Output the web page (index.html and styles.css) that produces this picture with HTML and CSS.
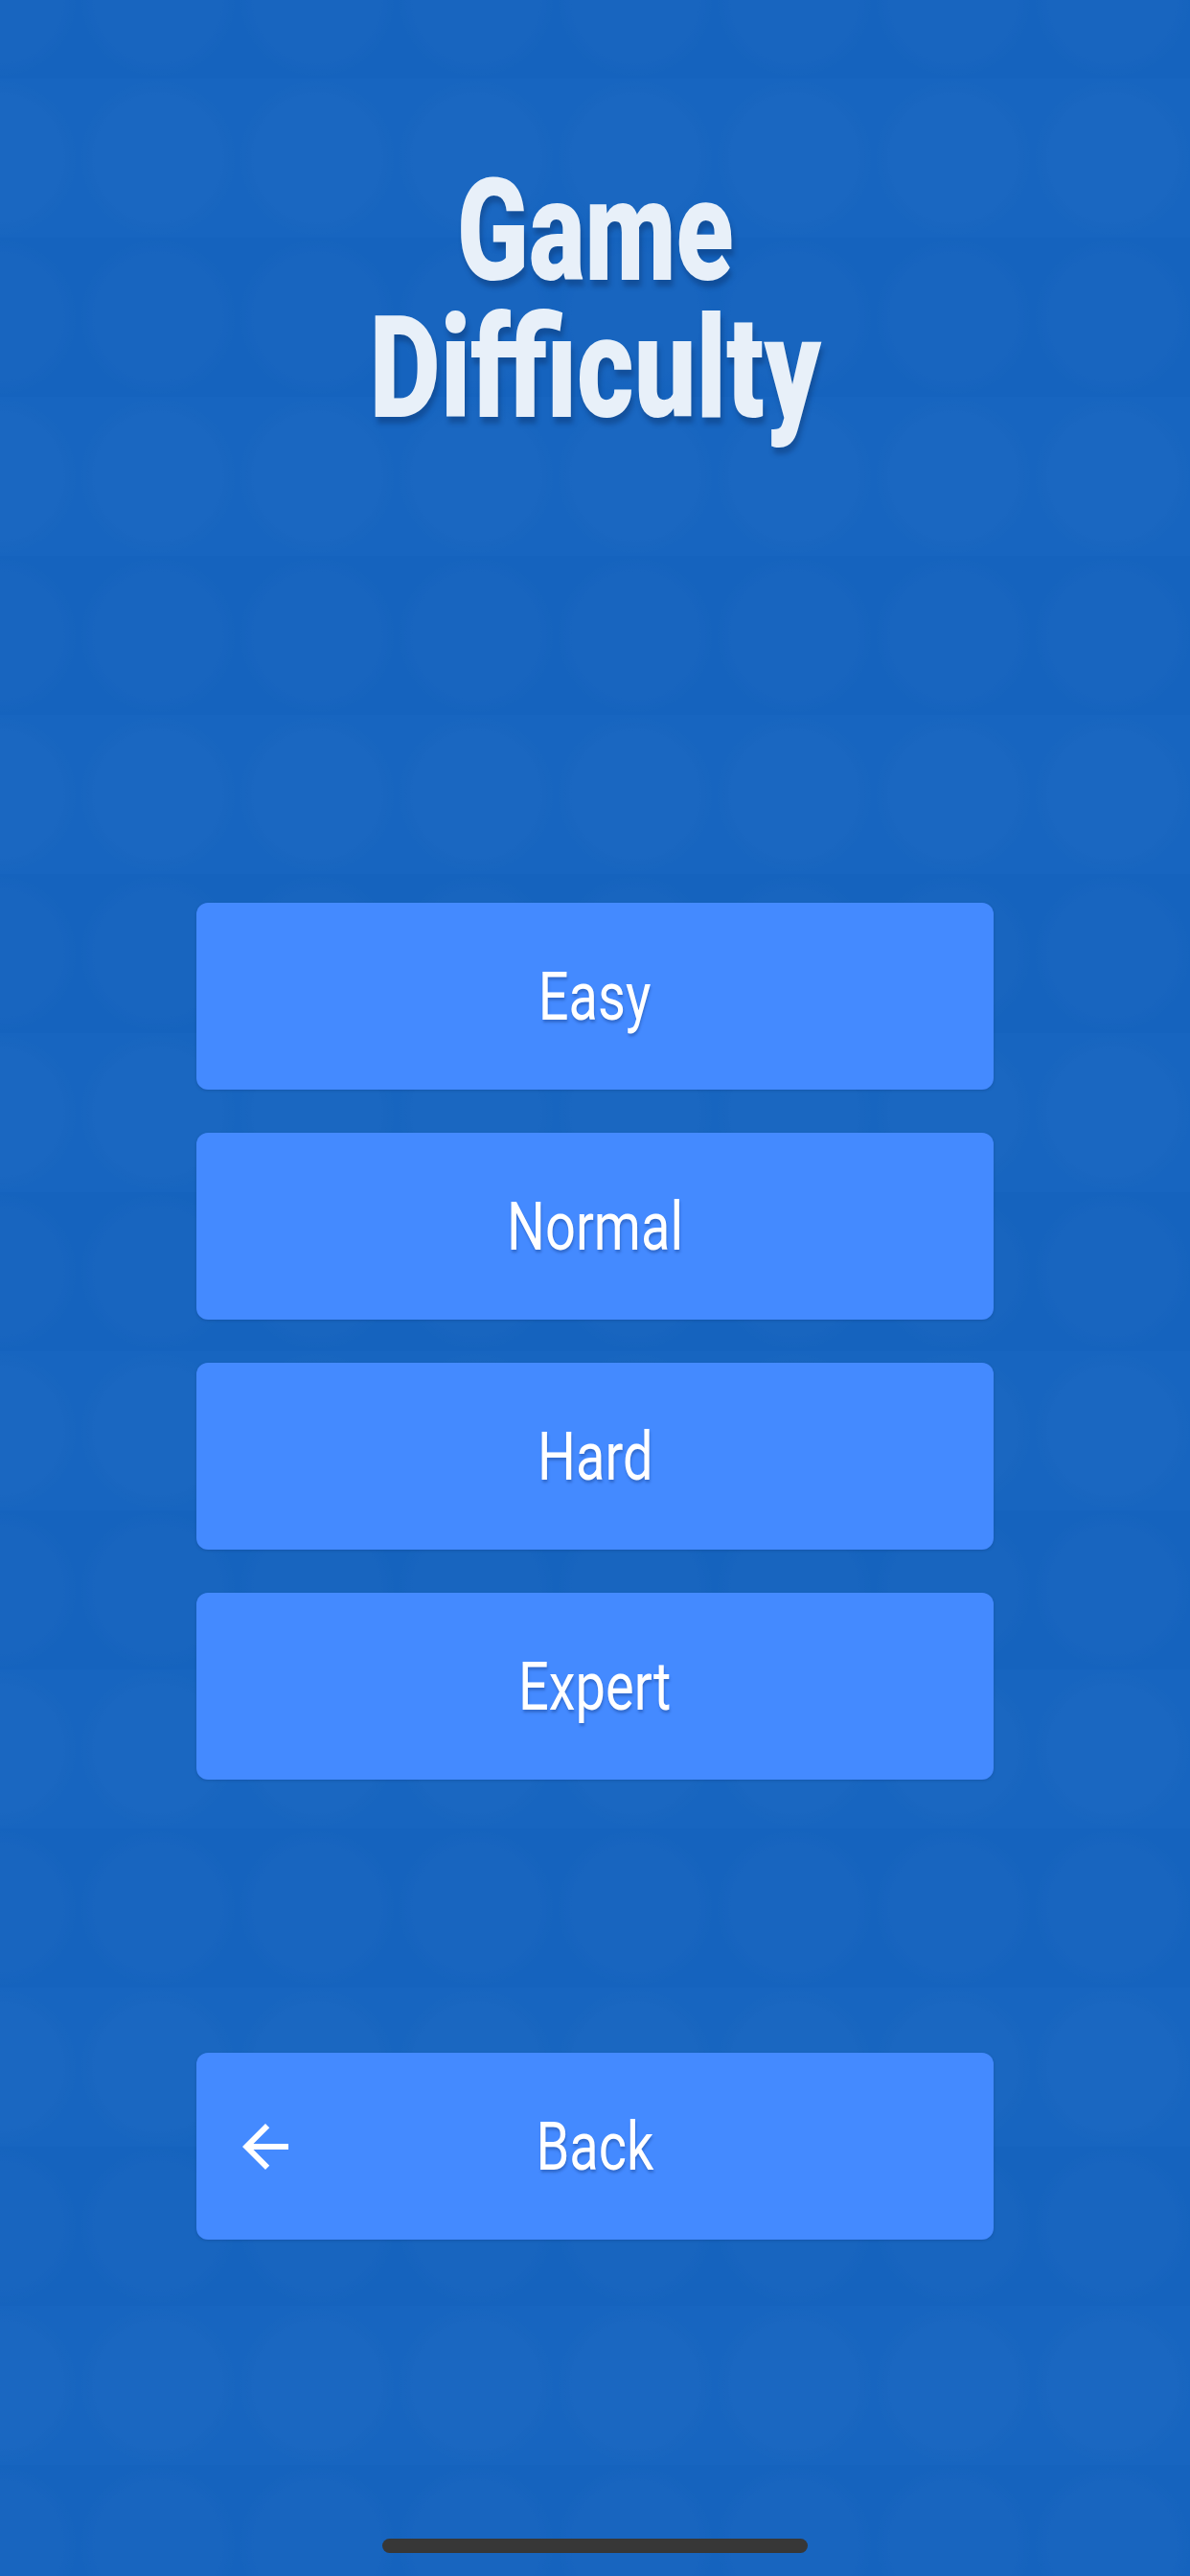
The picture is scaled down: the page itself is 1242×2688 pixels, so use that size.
FILE: index.html
```html
<!DOCTYPE html>
<html lang="en">
<head>
<meta charset="utf-8">
<title>Game Difficulty</title>
<link rel="stylesheet" href="styles.css">
</head>
<body>
<main class="screen">
  <h1 class="title">
    <span class="title-line">Game</span>
    <span class="title-line">Difficulty</span>
  </h1>

  <nav class="options">
    <button class="option" type="button"><span class="label">Easy</span></button>
    <button class="option" type="button"><span class="label">Normal</span></button>
    <button class="option" type="button"><span class="label">Hard</span></button>
    <button class="option" type="button"><span class="label">Expert</span></button>
  </nav>

  <button class="option option-back" type="button">
    <svg class="back-icon" viewBox="0 0 24 24" aria-hidden="true">
      <path d="M20 11H7.83l5.59-5.59L12 4l-8 8 8 8 1.41-1.41L7.83 13H20v-2z"/>
    </svg>
    <span class="label">Back</span>
    <span class="spacer"></span>
  </button>

  <div class="home-indicator"></div>
</main>
</body>
</html>
```

FILE: styles.css
```css
html, body {
  margin: 0;
  padding: 0;
}

body {
  width: 1242px;
  height: 2688px;
  overflow: hidden;
  background-color: #1564c0;
  /* faint grid of rounded cells */
  background-image:
    radial-gradient(ellipse 50% 50% at 50% 50%, rgba(255, 255, 255, 0.01) 0 80%, transparent 100%),
    linear-gradient(0deg, rgba(0, 0, 0, 0.008) 0 50%, rgba(255, 255, 255, 0.006) 50% 100%);
  background-size: 166px 166px, 166px 332px;
  background-position: 82px 82px, 82px 82px;
  font-family: Roboto, "Liberation Sans", sans-serif;
}

.screen {
  display: flex;
  flex-direction: column;
  align-items: center;
  height: 2688px;
}

.title {
  margin: 170px 0 0;
  display: flex;
  flex-direction: column;
  align-items: center;
  font-size: 149px;
  line-height: 143px;
  font-weight: 900;
  color: #e8f0f9;
  text-shadow: 3px 7px 6px rgba(10, 40, 90, 0.35);
}

.title-line {
  display: block;
  height: 143px;
  transform: scaleX(0.74);
}

.title-line + .title-line {
  transform: scaleX(0.77);
}

.options {
  margin-top: 486px;
  display: flex;
  flex-direction: column;
  gap: 45px;
}

.option {
  width: 832px;
  height: 195px;
  border: 0;
  border-radius: 12px;
  background: #448aff;
  box-shadow: 0 1px 3px rgba(8, 40, 100, 0.25);
  color: #ffffff;
  font-family: Roboto, "Liberation Sans", sans-serif;
  font-size: 70px;
  font-weight: 400;
  line-height: 1;
  padding: 0;
  display: flex;
  align-items: center;
  justify-content: center;
}

.label {
  display: inline-block;
  transform: scaleX(0.8);
  text-shadow: 1px 3px 3px rgba(10, 40, 100, 0.3);
}

.option-back {
  margin-top: 285px;
  display: grid;
  grid-template-columns: 1fr auto 1fr;
  align-items: center;
  padding: 0 36px;
  box-sizing: border-box;
}

.back-icon {
  width: 72px;
  height: 72px;
  fill: #ffffff;
  justify-self: start;
}

.home-indicator {
  margin-top: auto;
  margin-bottom: 24px;
  width: 444px;
  height: 15px;
  border-radius: 8px;
  background: #373737;
}
```
